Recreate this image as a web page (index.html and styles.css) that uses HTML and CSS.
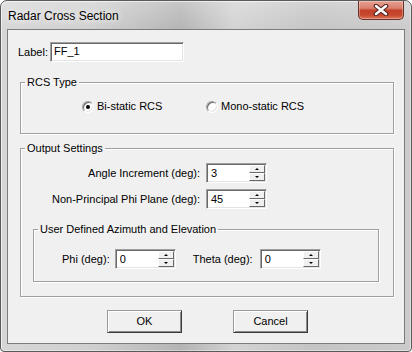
FILE: index.html
```html
<!DOCTYPE html>
<html lang="en">
<head>
    <meta charset="UTF-8">
    <meta name="viewport" content="width=device-width, initial-scale=1.0">
    <title>Radar Cross Section</title>
    <link rel="stylesheet" href="styles.css">
</head>
<body>
    <div class="window">
        <div class="titlebar">
            <span class="title">Radar Cross Section</span>
            <div class="close-btn">
                <svg width="16" height="12" viewBox="0 0 16 12">
                    <path d="M3 2 L13 10 M13 2 L3 10" stroke="#4f2620" stroke-width="4.6" stroke-linecap="round" fill="none"/>
                    <path d="M3 2 L13 10 M13 2 L3 10" stroke="#ffffff" stroke-width="2.4" stroke-linecap="round" fill="none"/>
                </svg>
            </div>
        </div>

        <div class="client">
            <div class="label-row">
                <span class="label-text">Label:</span>
                <div class="text-box">FF_1</div>
            </div>

            <fieldset class="group rcs-group">
                <legend>RCS Type</legend>
                <div class="radio-row">
                    <div class="radio radio-first"><span class="radio-mark checked"></span>Bi-static RCS</div>
                    <div class="radio"><span class="radio-mark"></span>Mono-static RCS</div>
                </div>
            </fieldset>

            <fieldset class="group output-group">
                <legend>Output Settings</legend>
                <div class="field-row">
                    <span class="field-label">Angle Increment (deg):</span>
                    <div class="spin">
                        <span class="spin-value">3</span>
                        <div class="spin-buttons">
                            <span class="spin-btn"><i class="arrow-up"></i></span>
                            <span class="spin-btn"><i class="arrow-down"></i></span>
                        </div>
                    </div>
                </div>
                <div class="field-row">
                    <span class="field-label">Non-Principal Phi Plane (deg):</span>
                    <div class="spin">
                        <span class="spin-value">45</span>
                        <div class="spin-buttons">
                            <span class="spin-btn"><i class="arrow-up"></i></span>
                            <span class="spin-btn"><i class="arrow-down"></i></span>
                        </div>
                    </div>
                </div>

                <fieldset class="group user-group">
                    <legend>User Defined Azimuth and Elevation</legend>
                    <div class="angle-row">
                        <span class="angle-label">Phi (deg):</span>
                        <div class="spin">
                            <span class="spin-value">0</span>
                            <div class="spin-buttons">
                                <span class="spin-btn"><i class="arrow-up"></i></span>
                                <span class="spin-btn"><i class="arrow-down"></i></span>
                            </div>
                        </div>
                        <span class="angle-label theta-label">Theta (deg):</span>
                        <div class="spin">
                            <span class="spin-value">0</span>
                            <div class="spin-buttons">
                                <span class="spin-btn"><i class="arrow-up"></i></span>
                                <span class="spin-btn"><i class="arrow-down"></i></span>
                            </div>
                        </div>
                    </div>
                </fieldset>
            </fieldset>

            <div class="button-row">
                <div class="push-btn">OK</div>
                <div class="push-btn">Cancel</div>
            </div>
        </div>
    </div>
</body>
</html>
```

FILE: styles.css
```css
* {
    box-sizing: border-box;
}

body {
    margin: 0;
    background: #ffffff;
    font-family: "Liberation Sans", Arial, sans-serif;
    font-size: 11px;
    line-height: 13px;
    color: #000000;
}

/* Window frame (Windows 7 basic look) */
.window {
    width: 412px;
    height: 352px;
    border: 1px solid #5a5a5a;
    border-radius: 7px 7px 4px 4px;
    padding: 0 6px 7px 6px;
    display: flex;
    flex-direction: column;
    background:
        linear-gradient(to bottom, rgba(255, 255, 255, 0.25), rgba(255, 255, 255, 0) 30px),
        linear-gradient(to right, #d6d6d6 0, #d0d0d0 22%, #b4b4b4 44%, #d3d3d3 57%, #c4c4c4 76%, #cbcbcb 100%);
    box-shadow: inset 1px 1px 0 rgba(255, 255, 255, 0.6), inset -1px -1px 0 rgba(255, 255, 255, 0.4);
}

.titlebar {
    height: 28px;
    flex-shrink: 0;
    display: flex;
    justify-content: space-between;
    align-items: flex-start;
}

.title {
    margin: 8px 0 0 1px;
    font-size: 12px;
    line-height: 14px;
    color: #000000;
    text-shadow: 0 0 6px rgba(255, 255, 255, 0.9), 0 0 10px rgba(255, 255, 255, 0.7);
}

.close-btn {
    width: 46px;
    height: 19px;
    margin-right: 1px;
    border: 1px solid #6a3129;
    border-top: 0;
    border-radius: 0 0 5px 5px;
    display: flex;
    justify-content: center;
    align-items: center;
    background: linear-gradient(to bottom, #e7a091 0, #d9806d 40%, #c33f28 52%, #c8472f 78%, #dc765a 100%);
    box-shadow: inset 0 0 0 1px rgba(255, 255, 255, 0.3);
}

/* Client area */
.client {
    flex: 1;
    background-color: #f0f0f0;
    border: 1px solid #7c7c7c;
    padding-top: 12px;
}

.label-row {
    display: flex;
    align-items: center;
    height: 20px;
    padding-left: 10px;
}

.label-text {
    margin-right: 2px;
}

.text-box {
    width: 134px;
    height: 20px;
    padding-left: 3px;
    line-height: 16px;
    background: #ffffff;
    border: 1px solid;
    border-color: #a0a0a0 #ffffff #ffffff #a0a0a0;
    box-shadow: inset 1px 1px 0 #696969, inset -1px -1px 0 #e3e3e3;
}

/* Group boxes */
.group {
    margin: 0;
    padding: 0;
    min-width: 0;
    border: 1px solid #a0a0a0;
    box-shadow: 1px 1px 0 #ffffff, inset 1px 1px 0 #ffffff;
}

.group legend {
    margin-left: 4px;
    padding: 0 2px;
    line-height: 13px;
}

.rcs-group {
    margin: 14px 10px 0 12px;
    padding: 11px 0 20px 0;
}

.radio-row {
    display: flex;
    padding-left: 61px;
}

.radio {
    display: flex;
    align-items: center;
    height: 13px;
}

.radio-first {
    width: 124px;
}

.radio-mark {
    width: 12px;
    height: 12px;
    margin-right: 3px;
    border-radius: 50%;
    background: #ffffff;
    border: 1px solid;
    border-color: #a0a0a0 #ffffff #ffffff #a0a0a0;
    box-shadow: inset 1px 1px 0 #696969, inset -1px -1px 0 #e3e3e3;
    display: flex;
    justify-content: center;
    align-items: center;
}

.radio-mark.checked::after {
    content: "";
    width: 4px;
    height: 4px;
    border-radius: 50%;
    background: #000000;
}

.output-group {
    margin: 8px 10px 0 12px;
    padding: 8px 0 14px 0;
}

.field-row {
    display: flex;
    align-items: center;
    margin-bottom: 6px;
}

.field-label {
    width: 179px;
    margin-right: 6px;
    text-align: right;
}

/* Spin boxes */
.spin {
    width: 61px;
    height: 20px;
    display: flex;
    background: #ffffff;
    border: 1px solid;
    border-color: #a0a0a0 #ffffff #ffffff #a0a0a0;
    box-shadow: inset 1px 1px 0 #696969, inset -1px -1px 0 #e3e3e3;
    padding: 1px 1px 1px 1px;
}

.spin-value {
    flex: 1;
    padding-left: 3px;
    line-height: 16px;
}

.spin-buttons {
    width: 16px;
    display: flex;
    flex-direction: column;
}

.spin-btn {
    flex: 1;
    background: #f0f0f0;
    border: 1px solid;
    border-color: #ffffff #696969 #696969 #ffffff;
    display: flex;
    justify-content: center;
    align-items: center;
}

.arrow-up {
    width: 0;
    height: 0;
    border-left: 2px solid transparent;
    border-right: 2px solid transparent;
    border-bottom: 2px solid #000000;
}

.arrow-down {
    width: 0;
    height: 0;
    border-left: 2px solid transparent;
    border-right: 2px solid transparent;
    border-top: 2px solid #000000;
}

.user-group {
    margin: 14px 14px 0 12px;
    padding: 13px 0 12px 0;
}

.angle-row {
    display: flex;
    align-items: center;
    padding-left: 28px;
}

.angle-label {
    margin-right: 5px;
}

.theta-label {
    margin-left: 17px;
    margin-right: 7px;
}

/* Dialog buttons */
.button-row {
    display: flex;
    gap: 51px;
    padding-left: 99px;
    margin-top: 13px;
}

.push-btn {
    width: 75px;
    height: 23px;
    display: flex;
    justify-content: center;
    align-items: center;
    background: #f0f0f0;
    border: 1px solid;
    border-color: #9a9a9a #3c3c3c #3c3c3c #9a9a9a;
    box-shadow: inset 1px 1px 0 #ffffff, inset -1px -1px 0 #8a8a8a;
}
```
